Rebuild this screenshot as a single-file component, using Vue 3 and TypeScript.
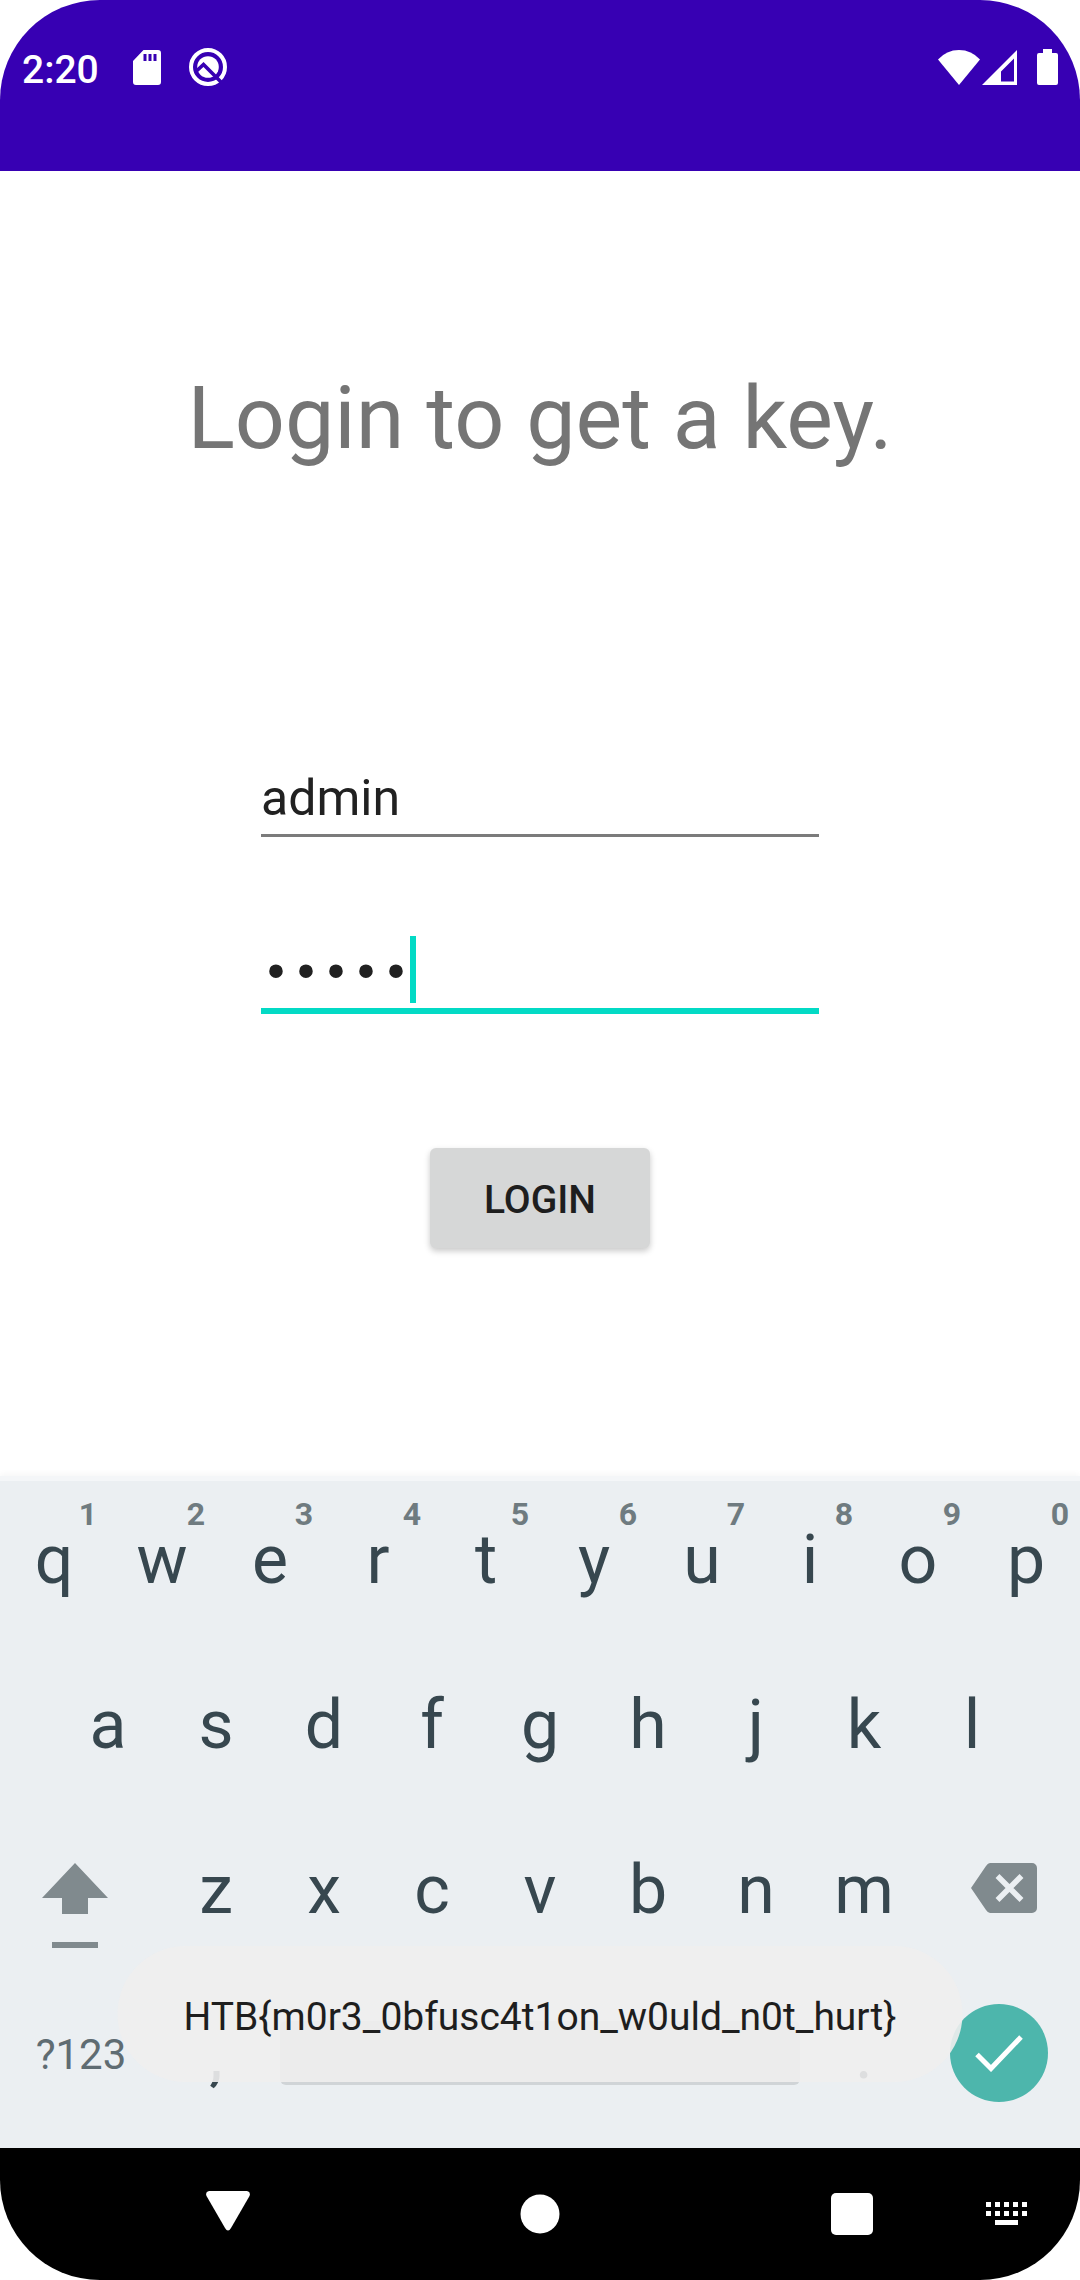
<script setup lang="ts">
import { ref } from 'vue'

interface LetterKey {
  letter: string
  hint?: string
}

const username = ref('admin')
const password = ref('admin')
const flag = ref('HTB{m0r3_0bfusc4t1on_w0uld_n0t_hurt}')

const topRow: LetterKey[] = [...'qwertyuiop'].map((letter, i) => ({
  letter,
  hint: String((i + 1) % 10),
}))
const homeRow: string[] = [...'asdfghjkl']
const bottomRow: string[] = [...'zxcvbnm']
const dotColumns = [0, 9, 18, 27, 36]
</script>

<template>
  <div class="screen">
    <header class="app-bar">
      <div class="status">
        <span class="clock">2:20</span>
        <span class="notice">
          <svg width="28" height="35" viewBox="0 0 28 35" aria-hidden="true">
            <path
              fill="#fff"
              fill-rule="evenodd"
              d="M10.500 0H25a3 3 0 0 1 3 3v29a3 3 0 0 1-3 3H3a3 3 0 0 1-3-3V11zM10.500 4v7h3V4zM15.500 4v7h3V4zM20.500 4v7h3V4z"
            />
          </svg>
        </span>
        <span class="notice">
          <svg width="38" height="38" viewBox="0 0 38 38" aria-hidden="true">
            <circle cx="19" cy="19" r="17" fill="none" stroke="#fff" stroke-width="4" />
            <circle cx="19" cy="19" r="10.800" fill="#fff" />
            <path d="M7 23.500L14.500 16.500L32 34" fill="none" stroke="#3700b3" stroke-width="3.600" />
          </svg>
        </span>
        <span class="system">
          <svg width="42" height="35" viewBox="0 0 42 35" aria-hidden="true">
            <path d="M0 9.500Q8.500 0 21 0T42 9.500L21 35z" fill="#fff" />
          </svg>
          <svg width="35" height="35" viewBox="0 0 35 35" aria-hidden="true">
            <path fill="#fff" fill-rule="evenodd" d="M35 0V35H0zM32 8.500L19 21.500V31.500H32z" />
          </svg>
          <svg class="battery" width="21" height="36" viewBox="0 0 21 36" aria-hidden="true">
            <path
              fill="#fff"
              d="M6 0h9v4h4a2 2 0 0 1 2 2v28a2 2 0 0 1-2 2H2a2 2 0 0 1-2-2V6a2 2 0 0 1 2-2h4z"
            />
          </svg>
        </span>
      </div>
    </header>

    <main class="content">
      <h1 class="title">Login to get a key.</h1>
      <form class="form" @submit.prevent>
        <div class="field">
          <input v-model="username" class="input" type="text" aria-label="Username" autocomplete="off" />
        </div>
        <div class="field field-active">
          <input
            v-model="password"
            class="input input-password"
            type="password"
            aria-label="Password"
            autocomplete="off"
          />
          <span class="caret"></span>
        </div>
        <button class="login" type="submit">LOGIN</button>
      </form>
    </main>

    <section class="keyboard" aria-label="Keyboard">
      <div class="row row-top">
        <button v-for="key in topRow" :key="key.letter" class="key" type="button">
          {{ key.letter }}<span class="hint">{{ key.hint }}</span>
        </button>
      </div>
      <div class="row row-home">
        <button v-for="letter in homeRow" :key="letter" class="key" type="button">{{ letter }}</button>
      </div>
      <div class="row row-bottom">
        <button class="key key-shift" type="button" aria-label="Shift">
          <svg width="66" height="86" viewBox="0 0 66 86" aria-hidden="true">
            <path d="M33 0L66 35H46V51H20V35H0zM10 79H56V85H10z" fill="#808a8e" />
          </svg>
        </button>
        <button v-for="letter in bottomRow" :key="letter" class="key" type="button">{{ letter }}</button>
        <button class="key key-delete" type="button" aria-label="Delete">
          <svg width="66" height="50" viewBox="0 0 66 50" aria-hidden="true">
            <path
              d="M19 0H61a5 5 0 0 1 5 5V45a5 5 0 0 1-5 5H19q-2 0-4-3L0 25L15 3q2-3 4-3z"
              fill="#808a8e"
            />
            <path d="M26.500 13L50.500 37M50.500 13L26.500 37" stroke="#ebeff2" stroke-width="5.500" />
          </svg>
        </button>
      </div>
      <div class="row row-space">
        <button class="key key-symbols" type="button">?123</button>
        <button class="key" type="button">,</button>
        <button class="key key-raised" type="button" aria-label="Space"><span class="space"></span></button>
        <button class="key" type="button">.</button>
        <button class="key key-raised" type="button" aria-label="Done">
          <span class="done">
            <svg width="48" height="38" viewBox="0 0 48 38" aria-hidden="true">
              <path d="M2 20.500L16 34.500L46 3" fill="none" stroke="#fff" stroke-width="5" />
            </svg>
          </span>
        </button>
      </div>
    </section>

    <nav class="nav" aria-label="System navigation">
      <div class="nav-main">
        <button class="nav-button" type="button" aria-label="Back">
          <svg class="back" width="44" height="40" viewBox="0 0 44 40" aria-hidden="true">
            <path
              d="M3 0H41q4 1 2.500 5L25 37q-3 5-6 0L.500 5Q-1 1 3 0z"
              fill="#fff"
            />
          </svg>
        </button>
        <button class="nav-button" type="button" aria-label="Home">
          <svg width="40" height="40" viewBox="0 0 40 40" aria-hidden="true">
            <circle cx="20" cy="20" r="19.500" fill="#fff" />
          </svg>
        </button>
        <button class="nav-button" type="button" aria-label="Recent apps">
          <svg width="42" height="42" viewBox="0 0 42 42" aria-hidden="true">
            <rect width="42" height="42" rx="5" fill="#fff" />
          </svg>
        </button>
      </div>
      <button class="nav-button nav-switch" type="button" aria-label="Switch keyboard">
        <svg width="42" height="24" viewBox="0 0 42 24" fill="#fff" aria-hidden="true">
          <rect v-for="x in dotColumns" :key="'a' + x" :x="x" y="0" width="5" height="5" />
          <rect v-for="x in dotColumns" :key="'b' + x" :x="x" y="9" width="5" height="5" />
          <rect x="9" y="18" width="23" height="5" />
        </svg>
      </button>
    </nav>

    <div class="toast" role="status">{{ flag }}</div>
  </div>
</template>

<style>
body {
  margin: 0;
  background: #fff;
}
</style>

<style scoped>
.screen {
  position: relative;
  display: flex;
  flex-direction: column;
  min-height: 100vh;
  overflow: hidden;
  border-radius: 100px;
  background: #fff;
  font-family: Roboto, sans-serif;
}

svg {
  display: block;
}

button {
  margin: 0;
  padding: 0;
  border: 0;
  background: none;
  font-family: inherit;
}

.app-bar {
  height: 171px;
  background: #3700b3;
}

.status {
  display: flex;
  align-items: center;
  height: 134px;
  padding: 0 22px;
  color: #fff;
}

.clock {
  margin-right: 18px;
  padding-top: 5px;
  font-size: 39px;
  font-weight: 500;
  line-height: 46px;
}

.notice {
  display: flex;
  justify-content: center;
  width: 61px;
}

.system {
  display: flex;
  align-items: center;
  gap: 2px;
  margin-left: auto;
}

.battery {
  margin-left: 18px;
}

.content {
  display: flex;
  flex: 1;
  flex-direction: column;
  align-items: center;
  padding-top: 195px;
}

.title {
  margin: 0;
  color: #757575;
  font-size: 88px;
  font-weight: 400;
  line-height: 104px;
}

.form {
  display: flex;
  flex-direction: column;
  align-items: center;
  width: 558px;
  max-width: 100%;
  margin-top: 299px;
}

.field {
  display: flex;
  align-items: center;
  width: 100%;
  padding-bottom: 7px;
  border-bottom: 3px solid #7b7b7b;
}

.field-active {
  margin-top: 99px;
  padding-bottom: 5px;
  border-bottom: 6px solid #03dac5;
}

.input {
  box-sizing: border-box;
  width: 100%;
  height: 58px;
  margin: 0;
  padding: 0;
  border: 0;
  outline: none;
  background: none;
  color: #212121;
  font-family: inherit;
  font-size: 50px;
  line-height: 58px;
}

.input-password {
  width: 149px;
  height: 67px;
  padding-top: 9px;
  font-family: "Liberation Mono", monospace;
}

.caret {
  width: 6px;
  height: 67px;
  background: #03dac5;
}

.login {
  width: 220px;
  height: 100px;
  margin-top: 134px;
  padding-top: 3px;
  border-radius: 6px;
  background: #d6d7d7;
  box-shadow: 0 3px 6px rgba(0, 0, 0, 0.22);
  color: #1e1e1e;
  font-size: 39px;
  font-weight: 500;
}

.keyboard {
  margin-top: 228px;
  padding: 1px 0 11px;
  background: linear-gradient(#f4f6f8 5px, #ebeff2 5px);
  box-shadow: 0 -2px 6px rgba(0, 0, 0, 0.04);
}

.row {
  display: grid;
  height: 165px;
}

.row-top {
  grid-template-columns: repeat(10, minmax(0, 1fr));
}

.row-home {
  grid-template-columns: repeat(9, minmax(0, 1fr));
  padding: 0 5%;
}

.row-bottom {
  grid-template-columns: minmax(0, 3fr) repeat(7, minmax(0, 2fr)) minmax(0, 3fr);
}

.row-space {
  grid-template-columns: minmax(0, 3fr) minmax(0, 2fr) minmax(0, 10fr) minmax(0, 2fr) minmax(0, 3fr);
}

.key {
  position: relative;
  display: flex;
  align-items: center;
  justify-content: center;
  color: #37474f;
  font-size: 68px;
  line-height: 80px;
}

.hint {
  position: absolute;
  top: 18px;
  right: 11px;
  color: #6f7b80;
  font-size: 32px;
  font-weight: 700;
  line-height: 38px;
}

.key-shift {
  align-items: flex-start;
  padding: 56px 12px 0 0;
}

.key-delete {
  padding: 0 0 3px 10px;
}

.key-raised {
  padding-bottom: 3px;
}

.key-symbols {
  color: #5f6c72;
  font-size: 42px;
}

.space {
  flex: 1;
  height: 60px;
  margin: 0 10px;
  border-bottom: 4px solid #d0d4d7;
  border-radius: 6px;
  background: #cdd6d3;
}

.done {
  display: flex;
  align-items: center;
  justify-content: center;
  width: 98px;
  height: 98px;
  border-radius: 50%;
  background: #4db6ac;
}

.nav {
  display: flex;
  height: 132px;
  padding-left: 146px;
  background: #000;
}

.nav-main {
  display: flex;
  flex: 1;
  justify-content: space-between;
}

.nav-button {
  display: flex;
  align-items: center;
  justify-content: center;
  width: 164px;
}

.nav-switch {
  width: 146px;
}

.back {
  margin-bottom: 7px;
}

.toast {
  position: absolute;
  bottom: 198px;
  left: 50%;
  box-sizing: border-box;
  padding: 48px 66px 42px;
  border-radius: 68px;
  background: rgba(239, 238, 238, 0.9);
  color: #1e1e1e;
  font-size: 39px;
  line-height: 46px;
  white-space: nowrap;
  transform: translateX(-50%);
}
</style>
